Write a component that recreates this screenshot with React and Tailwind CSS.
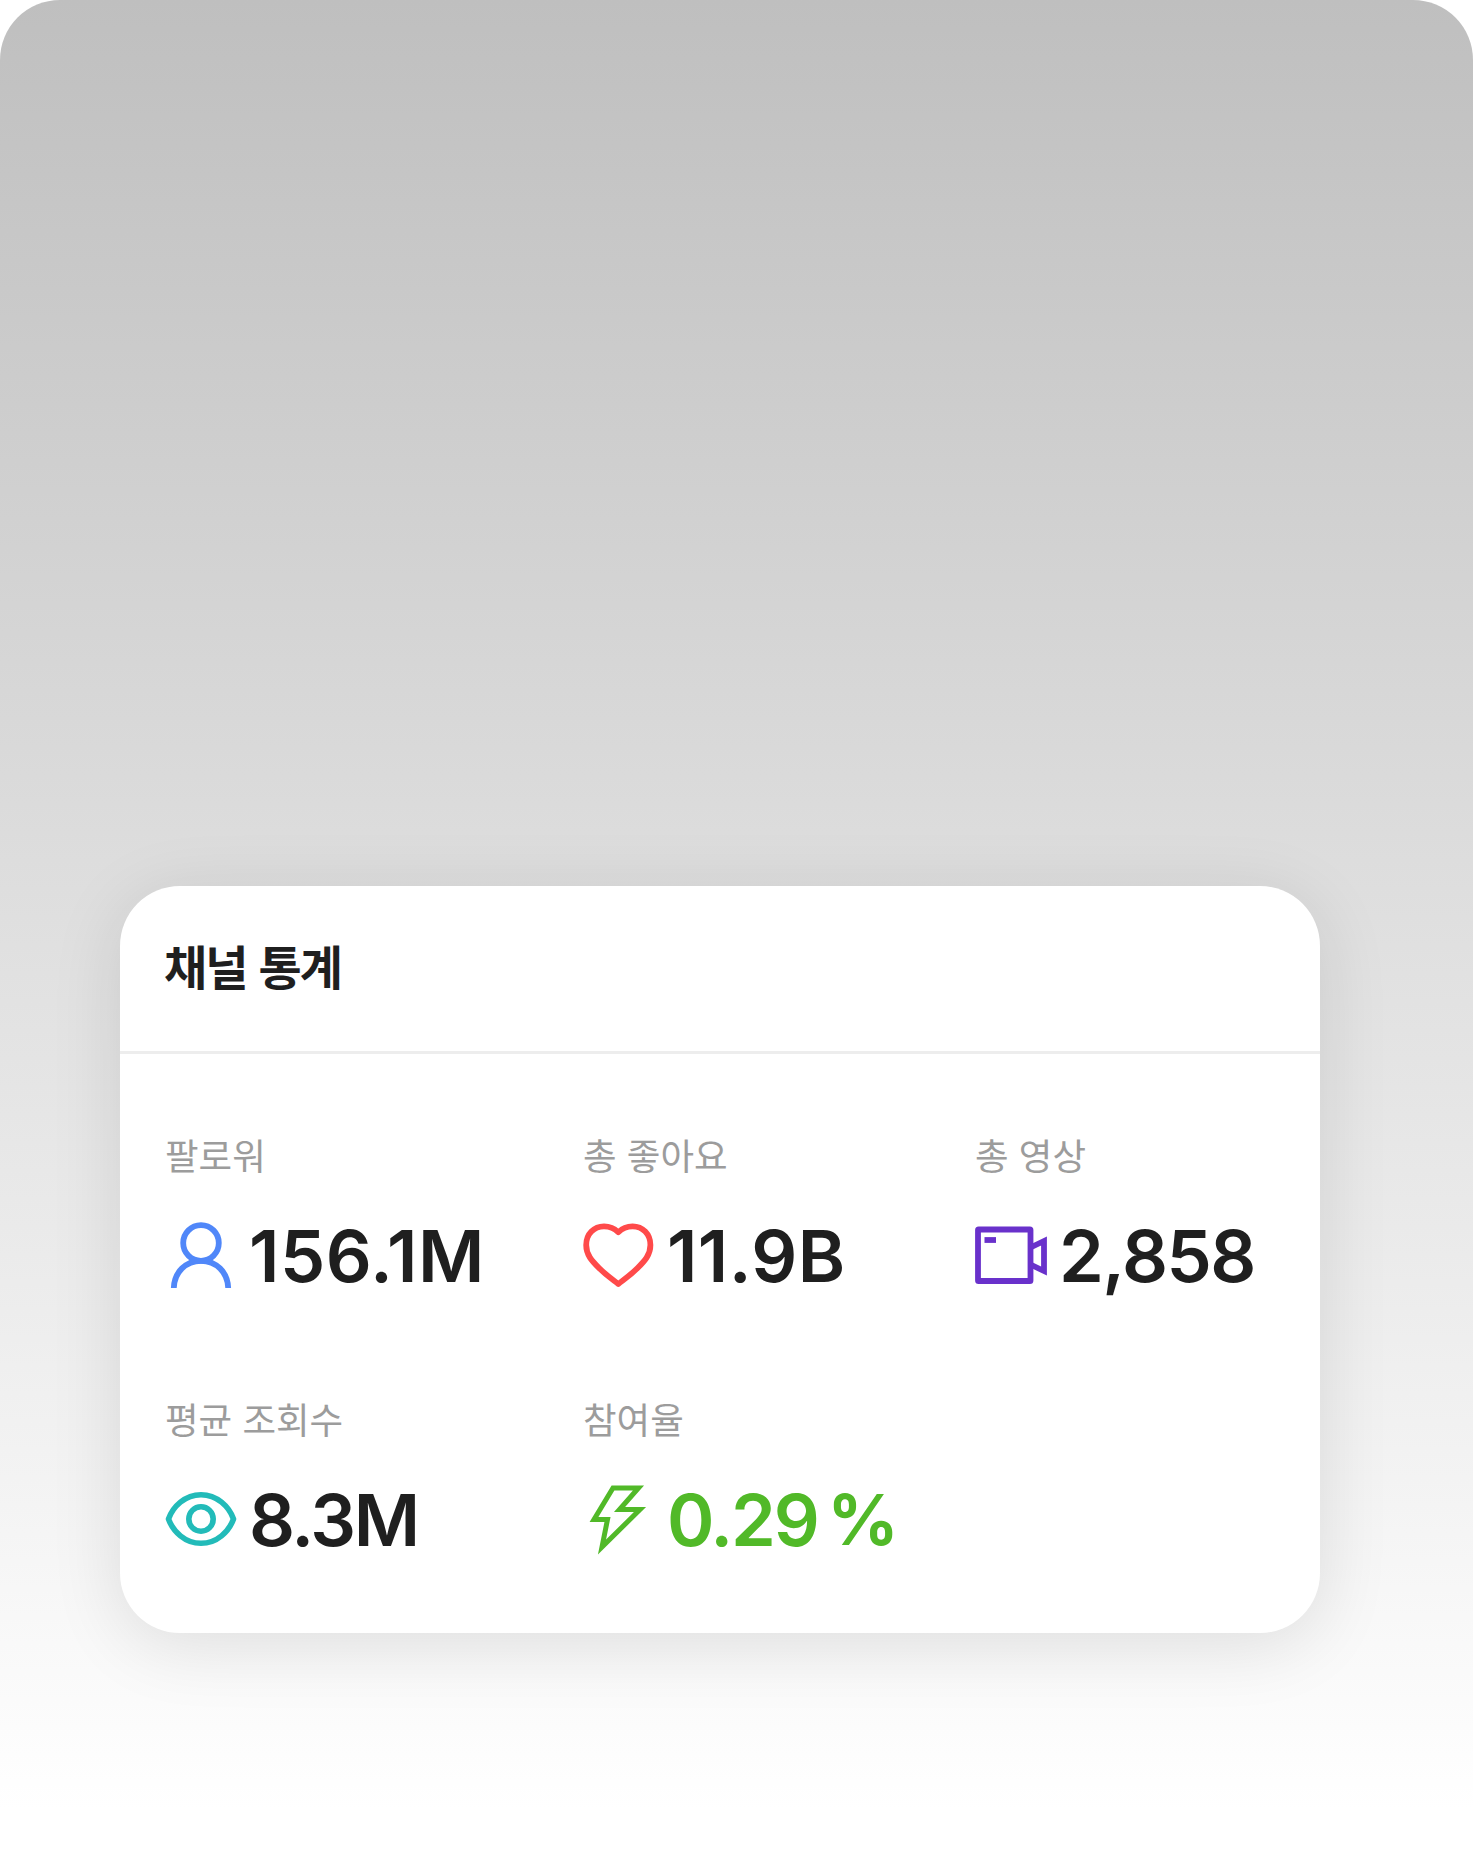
const iconProps = {
  viewBox: "0 0 72 72",
  fill: "none",
  className: "size-[72px] shrink-0",
};

function FollowerIcon() {
  return (
    <svg {...iconProps} stroke="#5087f9" strokeWidth="5.8">
      <circle cx="36" cy="24" r="17.8" />
      <path d="M8.800 69C9.300 53 21 41.800 36 41.800S62.700 53 63.200 69" />
    </svg>
  );
}

function HeartIcon() {
  return (
    <svg {...iconProps} stroke="#ff4a4a" strokeWidth="5.8" strokeLinejoin="round">
      <path d="M35.3 13.200C31 9 26.500 7.400 21 7.400C11 7.400 3.200 15 3.200 26C3.200 36 9 42 16 49C24 57 30 60.800 35.300 65C40.600 60.800 46.600 57 54.600 49C61.600 42 67.400 36 67.400 26C67.400 15 59.600 7.400 49.600 7.400C44.100 7.400 39.600 9 35.300 13.200Z" />
    </svg>
  );
}

function VideoIcon() {
  return (
    <svg {...iconProps} stroke="#6931cb" strokeWidth="5.8">
      <rect x="3" y="10.500" width="52.500" height="51.500" rx="0.6" />
      <path d="M9.500 21H21" />
      <path d="M55.500 28.500L69 22V52L55.500 45.500" />
    </svg>
  );
}

function EyeIcon() {
  return (
    <svg {...iconProps} stroke="#22bbb9" strokeWidth="5.6" strokeLinejoin="round">
      <path d="M3.500 36C8 23.500 20 11.700 36 11.700S64 23.500 68.500 36C64 48.500 52 60.300 36 60.300S8 48.500 3.500 36Z" />
      <circle cx="36" cy="36" r="12.200" />
    </svg>
  );
}

function BoltIcon() {
  return (
    <svg {...iconProps} stroke="#51b928" strokeWidth="5">
      <path d="M30 5H55.500L36.500 26.500H57L19 64L24.500 36.500H11Z" />
    </svg>
  );
}

const stats = [
  { label: "팔로워", value: "156.1M", tracking: "tracking-[0.5px]", Icon: FollowerIcon },
  { label: "총 좋아요", value: "11.9B", tracking: "tracking-[0.4px]", Icon: HeartIcon },
  { label: "총 영상", value: "2,858", tracking: "tracking-[-1.5px]", Icon: VideoIcon },
  { label: "평균 조회수", value: "8.3M", tracking: "tracking-[-2.3px]", Icon: EyeIcon },
  { label: "참여율", value: "0.29", unit: "%", tracking: "tracking-[-2.2px]", Icon: BoltIcon },
];

function Stat({ label, value, unit, tracking, Icon }) {
  return (
    <div className="flex flex-col gap-9">
      <div className="h-[54px] pt-px text-[36.5px] leading-[54px] font-normal whitespace-nowrap text-[#9c9c9c]">
        {label}
      </div>
      <div
        className={
          "flex h-[72px] items-center gap-3 text-[72px] leading-[72px] font-semibold whitespace-nowrap " +
          (unit ? "text-[#51b928]" : "text-[#1f1f1f]")
        }
      >
        <Icon />
        <span className={"pt-0.5 " + tracking}>{value}</span>
        {unit && <span className="-ml-0.5 pt-0.5 text-[70px] font-bold">{unit}</span>}
      </div>
    </div>
  );
}

export default function App() {
  return (
    <div className="h-[1866px] w-[1473px] overflow-hidden bg-white font-['Inter','Noto_Sans_CJK_KR',sans-serif]">
      <main className="h-full rounded-[60px] bg-linear-to-b from-[#bfbfbf] to-white to-97% pt-[886px] pl-[120px]">
        <section className="h-[747px] w-[1200px] rounded-[60px] bg-white shadow-[0_12px_72px_rgba(0,0,0,0.11)]">
          <header className="flex h-[168px] items-center border-b-3 border-[#ededed] pl-[44px]">
            <h1 className="pb-0.5 text-[47px] leading-[72px] font-bold tracking-[-2px] text-[#1f1f1f] [word-spacing:3px]">
              채널 통계
            </h1>
          </header>
          <div className="grid grid-cols-[418px_392px_auto] gap-y-[102px] pt-[75px] pl-[45px]">
            {stats.map((stat) => (
              <Stat key={stat.label} {...stat} />
            ))}
          </div>
        </section>
      </main>
    </div>
  );
}
